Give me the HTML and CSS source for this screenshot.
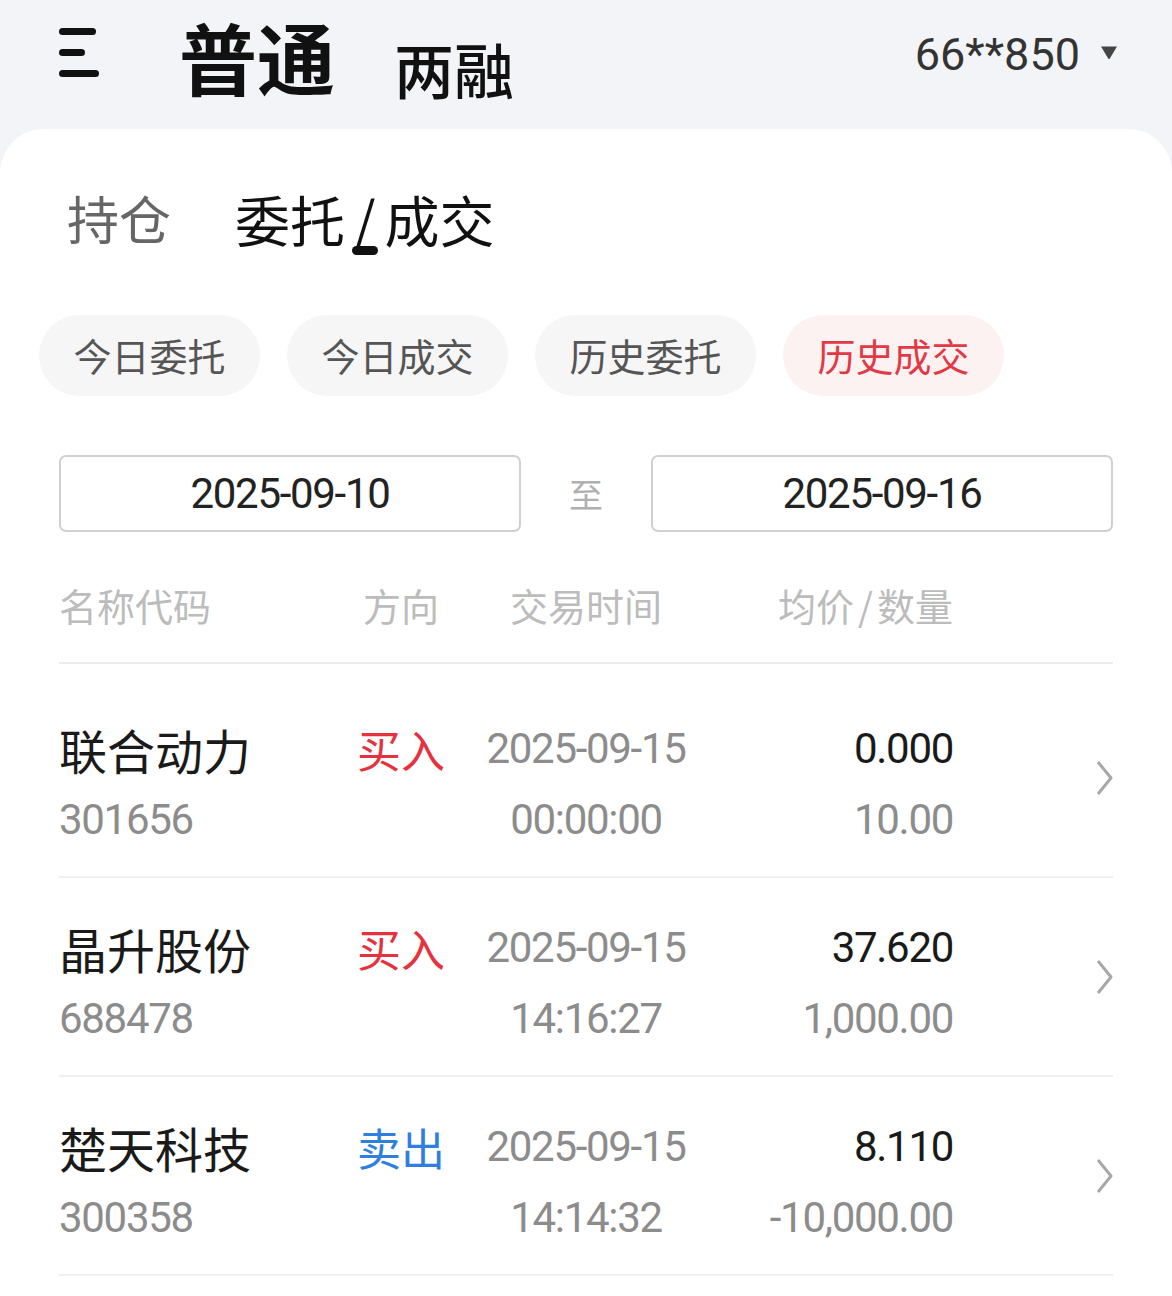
FILE: index.html
```html
<!DOCTYPE html>
<html lang="zh-CN">
<head>
    <meta charset="UTF-8">
    <meta name="viewport" content="width=device-width, initial-scale=1.0">
    <title>普通 - 委托/成交</title>
    <link rel="stylesheet" href="styles.css">
</head>
<body>
    <div class="topbar">
        <svg class="menu" width="41" height="50" viewBox="0 0 41 50">
            <line x1="3.5" y1="3.5" x2="33.5" y2="3.5"/>
            <line x1="3.5" y1="24.5" x2="22.5" y2="24.5"/>
            <line x1="3.5" y1="45.5" x2="36.5" y2="45.5"/>
        </svg>
        <div class="titles">
            <span class="title-main">普通</span>
            <span class="title-sub">两融</span>
        </div>
        <div class="account">
            <span class="acct">66**850</span>
            <svg class="caret" width="18" height="15" viewBox="0 0 18 15">
                <path d="M1 1.5 H17 L9.8 13.5 Q9 14.6 8.2 13.5 Z"/>
            </svg>
        </div>
    </div>

    <div class="card">
        <div class="tabs">
            <div class="tab">持仓</div>
            <div class="tab active">
                <span>委托<span class="sep">/</span>成交</span>
                <i class="indicator"></i>
            </div>
        </div>

        <div class="chips">
            <div class="chip">今日委托</div>
            <div class="chip">今日成交</div>
            <div class="chip">历史委托</div>
            <div class="chip active">历史成交</div>
        </div>

        <div class="dates">
            <div class="date-box num">2025-09-10</div>
            <div class="to">至</div>
            <div class="date-box num">2025-09-16</div>
        </div>

        <div class="table">
            <div class="grid head">
                <div>名称代码</div>
                <div class="center">方向</div>
                <div class="center">交易时间</div>
                <div class="right">均价<span class="sep-sm">/</span>数量</div>
            </div>

            <div class="list">
                <div class="grid row">
                    <div class="name">联合动力</div>
                    <div class="dir buy">买入</div>
                    <div class="num center muted">2025-09-15</div>
                    <div class="num right price">0.000</div>
                    <svg class="chevron" width="18" height="36" viewBox="0 0 18 36"><polyline points="2,2 15,18 2,34"/></svg>
                    <div class="num muted code">301656</div>
                    <div class="num center muted time">00:00:00</div>
                    <div class="num right muted qty">10.00</div>
                </div>
                <div class="grid row">
                    <div class="name">晶升股份</div>
                    <div class="dir buy">买入</div>
                    <div class="num center muted">2025-09-15</div>
                    <div class="num right price">37.620</div>
                    <svg class="chevron" width="18" height="36" viewBox="0 0 18 36"><polyline points="2,2 15,18 2,34"/></svg>
                    <div class="num muted code">688478</div>
                    <div class="num center muted time">14:16:27</div>
                    <div class="num right muted qty">1,000.00</div>
                </div>
                <div class="grid row">
                    <div class="name">楚天科技</div>
                    <div class="dir sell">卖出</div>
                    <div class="num center muted">2025-09-15</div>
                    <div class="num right price">8.110</div>
                    <svg class="chevron" width="18" height="36" viewBox="0 0 18 36"><polyline points="2,2 15,18 2,34"/></svg>
                    <div class="num muted code">300358</div>
                    <div class="num center muted time">14:14:32</div>
                    <div class="num right muted qty">-10,000.00</div>
                </div>
            </div>
        </div>
    </div>
</body>
</html>
```

FILE: styles.css
```css
body {
    margin: 0;
    font-family: "Noto Sans CJK SC", "Noto Sans", sans-serif;
    background-color: #f3f4f8;
    color: #1f1f1f;
}
.num, .acct {
    font-family: "Roboto", "Liberation Sans", sans-serif;
}
.num {
    letter-spacing: -1.3px;
}
.topbar {
    display: flex;
    align-items: flex-start;
    height: 129px;
    padding: 0 54px 0 59px;
}
.menu {
    margin-top: 28px;
}
.menu line {
    stroke: #111;
    stroke-width: 7;
    stroke-linecap: round;
}
.titles {
    display: flex;
    align-items: flex-end;
    margin-top: 17px;
    margin-left: 79px;
    color: #111;
    line-height: 1;
}
.title-main {
    font-size: 78px;
    font-weight: 700;
}
.title-sub {
    font-size: 60px;
    font-weight: 500;
    margin-left: 59px;
    margin-bottom: -3px;
}
.account {
    display: flex;
    align-items: center;
    margin-left: auto;
    margin-top: 32px;
    font-size: 45px;
    line-height: 45px;
    color: #333;
}
.caret {
    margin-left: 20px;
    margin-top: -4px;
    fill: #444;
}
.card {
    background: #fff;
    border-radius: 44px 44px 0 0;
    min-height: 1167px;
    overflow: hidden;
}
.tabs {
    display: flex;
    align-items: flex-start;
    gap: 64px;
    padding: 59px 0 0 67px;
}
.tab {
    display: flex;
    flex-direction: column;
    align-items: center;
    font-size: 52px;
    line-height: 60px;
    color: #666;
}
.tab.active {
    font-size: 55px;
    color: #111;
}
.sep {
    margin: 0 9px;
}
.sep-sm {
    margin: 0 4px;
}
.indicator {
    display: block;
    width: 26px;
    height: 9px;
    margin-top: -2px;
    border-radius: 5px;
    background: #111;
}
.chips {
    display: flex;
    gap: 27px;
    margin-top: 60px;
    padding-left: 39px;
}
.chip {
    width: 221px;
    height: 81px;
    border-radius: 41px;
    background: #f6f6f6;
    color: #555;
    font-size: 38px;
    line-height: 79px;
    text-align: center;
}
.chip.active {
    background: #fdf2f2;
    color: #e23a45;
}
.dates {
    display: flex;
    align-items: center;
    margin-top: 59px;
    padding: 0 59px;
}
.date-box {
    flex: 1;
    height: 73px;
    border: 2px solid #d0d0d0;
    border-radius: 7px;
    font-size: 42px;
    line-height: 73px;
    text-align: center;
    color: #222;
}
.to {
    width: 130px;
    text-align: center;
    font-size: 34px;
    color: #b0b0b0;
}
.table {
    padding: 0 59px;
}
.grid {
    display: grid;
    grid-template-columns: 297px 90px 280px 227px 1fr;
}
.center {
    text-align: center;
}
.right {
    text-align: right;
}
.head {
    margin-top: 48px;
    padding-bottom: 32px;
    border-bottom: 2px solid #ececec;
    font-size: 38px;
    line-height: 50px;
    color: #bcbcbc;
}
.list {
    padding-top: 15px;
}
.row {
    grid-template-rows: 52px 52px;
    row-gap: 19px;
    padding: 44px 0 30px;
    border-bottom: 2px solid #f0f0f0;
    line-height: 52px;
}
.name {
    font-size: 48px;
    color: #1a1a1a;
}
.dir {
    font-size: 44px;
    text-align: center;
}
.buy {
    color: #e5323e;
}
.sell {
    color: #2f7fe0;
}
.row .num {
    font-size: 42px;
}
.muted {
    color: #8c8c8c;
}
.price {
    color: #1a1a1a;
}
.code {
    grid-column: 1;
}
.time {
    grid-column: 3;
}
.qty {
    grid-column: 4;
}
.chevron {
    grid-column: 5;
    grid-row: 1 / span 2;
    align-self: center;
    justify-self: end;
    margin-top: -14px;
    margin-right: -1px;
}
.chevron polyline {
    fill: none;
    stroke: #a8a8a8;
    stroke-width: 3;
    stroke-linejoin: round;
}
```
